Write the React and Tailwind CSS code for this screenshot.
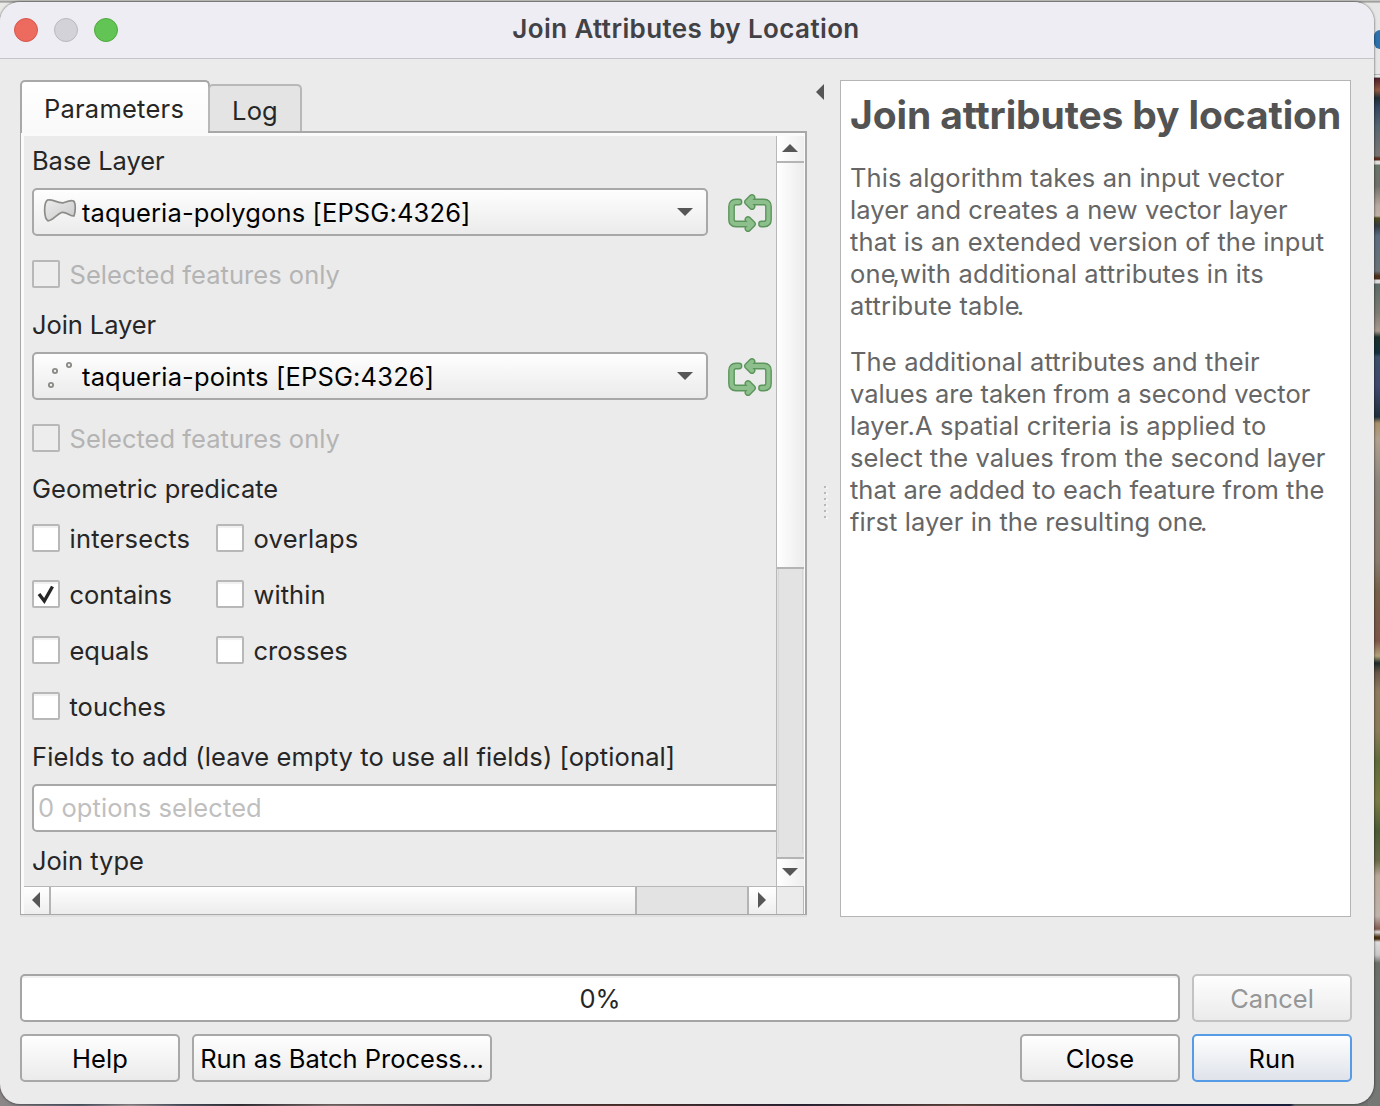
import React from "react";

function Label({ children, className = "" }) {
  return (
    <div className={`h-8 shrink-0 whitespace-nowrap text-[25.5px] leading-8 text-[#262626] ${className}`}>
      {children}
    </div>
  );
}

function Tri({ dir }) {
  const d = {
    up: "M0 8 L8 0 L16 8 Z",
    down: "M0 0 L16 0 L8 8 Z",
    left: "M8 0 L8 16 L0 8 Z",
    right: "M0 0 L8 8 L0 16 Z",
  }[dir];
  const vertical = dir === "up" || dir === "down";
  return (
    <svg width={vertical ? 16 : 8} height={vertical ? 8 : 16} className="block shrink-0">
      <path d={d} fill="#565656" />
    </svg>
  );
}

function Combo({ icon, children, className }) {
  return (
    <div className="flex h-12 w-[676px] shrink-0 items-center rounded-[5px] border-2 border-[#a8a8a8] bg-linear-to-b from-[#fefefe] to-[#ebebeb] pr-[13px]">
      <div className="w-12 shrink-0">{icon}</div>
      <div className={`flex-1 whitespace-nowrap pt-0.5 text-[25.5px] leading-8 text-black ${className}`}>{children}</div>
      <Tri dir="down" />
    </div>
  );
}

function PolygonIcon() {
  return (
    <svg width="48" height="44" viewBox="0 0 48 44" className="block">
      <defs>
        <linearGradient id="poly" x1="0" y1="0" x2="1" y2="1">
          <stop offset="0" stopColor="#ececec" />
          <stop offset="1" stopColor="#c9c9c9" />
        </linearGradient>
      </defs>
      <path
        d="M13.500 10 C18.500 8.500 23 13.500 29.500 12.800 C33.500 11.300 36.500 9.800 39.500 11 C42 13 41.500 22 40 26 C36.500 26.500 32.500 21.500 27.500 22.500 C22.500 24.500 18.500 30.800 14 30.800 C9.700 28 9.500 13 13.500 10 Z"
        fill="url(#poly)"
        stroke="#8b8b87"
        strokeWidth="1.700"
      />
    </svg>
  );
}

function PointsIcon() {
  return (
    <svg width="48" height="44" viewBox="0 0 48 44" className="block" fill="#f4f4f4" stroke="#8b8b87" strokeWidth="1.900">
      <circle cx="21" cy="17" r="2.100" />
      <circle cx="35" cy="11" r="2.100" />
      <circle cx="17" cy="31" r="2.100" />
    </svg>
  );
}

function IterateIcon() {
  const d =
    "M11 9 H8 Q3.500 9 3.500 13.500 V26.500 Q3.500 31 8 31 H24 M20 26.500 L24.500 31 L20 35.500 M33.500 31 H36 Q40.500 31 40.500 26.500 V13.500 Q40.500 9 36 9 H20 M24 4.500 L19.500 9 L24 13.500";
  return (
    <svg width="44" height="40" viewBox="0 0 44 40" className="mt-0.5 block shrink-0" fill="none" strokeLinejoin="round" strokeLinecap="round">
      <path d={d} stroke="#5b955b" strokeWidth="6.800" />
      <path d={d} stroke="#8cbf8c" strokeWidth="4" />
    </svg>
  );
}

function Check({ label, checked, disabled, tracking = "" }) {
  return (
    <div className="flex h-7 shrink-0 items-center gap-[9.5px]">
      <div
        className={`flex size-7 shrink-0 items-center justify-center rounded-[2px] border-2 border-[#b8b8b8] ${
          disabled ? "bg-[#ededed]" : "bg-white shadow-[inset_0_2px_1px_#f0f0f0]"
        }`}
      >
        {checked && (
          <svg width="24" height="24" viewBox="0 0 24 24" className="block">
            <path d="M5 12 L10.300 19 L18.500 4.500" fill="none" stroke="#262626" strokeWidth="3.400" />
          </svg>
        )}
      </div>
      <div
        className={`whitespace-nowrap pt-px text-[25.5px] leading-8 ${tracking} ${
          disabled ? "text-[#b4b4b4]" : "text-[#262626]"
        }`}
      >
        {label}
      </div>
    </div>
  );
}

function Button({ children, className }) {
  return (
    <button
      className={`flex h-12 shrink-0 items-center justify-center whitespace-nowrap rounded-[5px] border-2 bg-linear-to-b from-[#fefefe] pt-0.5 text-[25.5px] leading-8 ${className}`}
    >
      {children}
    </button>
  );
}

function Tabs() {
  return (
    <div className="relative z-10 flex h-[53px] items-start">
      <div className="flex h-[53px] w-[190px] shrink-0 items-center justify-center rounded-t-[5px] border-2 border-b-0 border-[#a8a8a8] bg-linear-to-b from-white to-[#f9f9f9] pr-0.5 pt-[3px] text-[25.5px] leading-8 tracking-[0.25px] text-[#262626]">
        Parameters
      </div>
      <div className="-ml-0.5 mt-1 flex h-[47px] w-[94px] items-center justify-center rounded-t-[5px] border-2 border-b-0 border-[#b8b8b8] bg-[#e4e4e4] pt-1 text-[25.5px] leading-8 tracking-[0.2px] text-[#262626]">
        Log
      </div>
    </div>
  );
}

function Form() {
  return (
    <div className="flex h-[750px] w-[752px] flex-col overflow-hidden bg-[#ebebeb] pl-2 pt-[9px]">
      <Label className="tracking-[-0.06px]">Base Layer</Label>
      <div className="mt-[11px] flex shrink-0 items-center gap-5">
        <Combo icon={<PolygonIcon />} className="tracking-[0.13px]">taqueria-polygons [EPSG:4326]</Combo>
        <IterateIcon />
      </div>
      <div className="mt-6"><Check label="Selected features only" disabled tracking="tracking-[0.03px]" /></div>
      <Label className="mt-[21px] tracking-[-0.08px]">Join Layer</Label>
      <div className="mt-[11px] flex shrink-0 items-center gap-5">
        <Combo icon={<PointsIcon />} className="tracking-[0.16px]">taqueria-points [EPSG:4326]</Combo>
        <IterateIcon />
      </div>
      <div className="mt-6"><Check label="Selected features only" disabled tracking="tracking-[0.03px]" /></div>
      <Label className="mt-[21px]">Geometric predicate</Label>
      <div className="mt-[19px] grid shrink-0 grid-cols-[184px_184px] gap-y-7">
        <Check label="intersects" tracking="tracking-[0.25px]" />
        <Check label="overlaps" tracking="tracking-[0.25px]" />
        <Check label="contains" checked />
        <Check label="within" tracking="tracking-[0.07px]" />
        <Check label="equals" />
        <Check label="crosses" />
        <Check label="touches" />
      </div>
      <Label className="mt-[21px] tracking-[0.11px]">Fields to add (leave empty to use all fields) [optional]</Label>
      <div className="mt-[11px] flex h-12 w-[780px] shrink-0 items-center rounded-[5px] border-2 border-[#a8a8a8] bg-white pl-1 text-[25.5px] leading-8 tracking-[0.09px] text-[#bfbfbf]">
        0 options selected
      </div>
      <Label className="mt-[13px]">Join type</Label>
    </div>
  );
}

function VerticalScroll() {
  return (
    <div className="flex h-[750px] w-7 flex-col border-l border-[#b8b8b8]">
      <div className="flex h-[27px] items-center justify-center border-b-2 border-[#b4b4b4] bg-linear-to-r from-white to-[#eeeeee] pb-px pr-0.5">
        <Tri dir="up" />
      </div>
      <div className="h-[404px] bg-linear-to-r from-white to-[#ececec]" />
      <div className="flex-1 border-t-2 border-[#b4b4b4] bg-[#e3e3e3] px-px">
        <div className="h-[284px] border-x border-[#d6d6d6]" />
      </div>
      <div className="flex h-[29px] items-center justify-center border-t-2 border-[#b4b4b4] bg-linear-to-r from-white to-[#eeeeee] pb-0.5 pr-0.5">
        <Tri dir="down" />
      </div>
    </div>
  );
}

function HorizontalScroll() {
  return (
    <div className="flex h-7 border-t border-[#b8b8b8]">
      <div className="flex w-[27px] items-center justify-center border-r-2 border-[#b4b4b4] bg-linear-to-b from-white to-[#eeeeee] pb-0.5 pr-px">
        <Tri dir="left" />
      </div>
      <div className="w-[584px] bg-linear-to-b from-white to-[#ececec]" />
      <div className="flex-1 border-l-2 border-[#b4b4b4] bg-[#e3e3e3]" />
      <div className="flex w-[29px] items-center justify-center border-l-2 border-[#b4b4b4] bg-linear-to-b from-white to-[#eeeeee] pb-0.5 pr-0.5">
        <Tri dir="right" />
      </div>
      <div className="w-7 border-x border-[#b8b8b8] bg-[#ebebeb]" />
    </div>
  );
}

function HelpPanel() {
  return (
    <div className="h-[837px] w-[511px] shrink-0 border border-[#b5b5b5] bg-white pl-[9px] pt-2.5 text-[#666666]">
      <h1 className="h-12 whitespace-nowrap text-[39px] font-bold leading-[48px] tracking-[-0.13px] text-[#535353]">
        Join attributes by location
      </h1>
      <div className="mt-[23px] whitespace-nowrap text-[25.5px] leading-8">
        <div className="tracking-[0.1px]">This algorithm takes an input vector</div>
        <div className="tracking-[0.06px]">layer and creates a new vector layer</div>
        <div className="tracking-[0.11px]">that is an extended version of the input</div>
        <div className="tracking-[0.15px]">on<span className="tracking-[-3px]">e</span>,with additional attributes in its</div>
        <div className="tracking-[0.2px]">attribute tabl<span className="tracking-[-3px]">e</span>.</div>
      </div>
      <div className="mt-6 whitespace-nowrap text-[25.5px] leading-8">
        <div className="tracking-[0.14px]">The additional attributes and their</div>
        <div className="tracking-[-0.03px]">values are taken from a second vector</div>
        <div className="tracking-[0.12px]">layer.A spatial criteria is applied to</div>
        <div className="tracking-[0.05px]">select the values from the second layer</div>
        <div className="tracking-[0.03px]">that are added to each feature from the</div>
        <div className="tracking-[0.08px]">first layer in the resulting on<span className="tracking-[-3px]">e</span>.</div>
      </div>
    </div>
  );
}

function Splitter() {
  return (
    <div className="flex w-[33px] shrink-0 flex-col pl-[9px]">
      <div className="mt-1"><Tri dir="left" /></div>
      <div className="mt-[386px] flex flex-col gap-1 pl-2">
        {[0, 1, 2, 3, 4, 5].map((i) => (
          <div key={i} className="size-0.5 bg-[#b8b8b8] shadow-[2px_1px_0_#f6f6f6]" />
        ))}
      </div>
    </div>
  );
}

function Desktop() {
  return (
    <div className="flex h-full w-3 flex-col bg-[#e6e6e6]">
      <div className="h-[30px] bg-[linear-gradient(to_bottom,#d8d8d4_0px,#8d8d8d_2px,#e6e6e6_3px)]" />
      <div className="ml-1.5 h-[19px] rounded-l-[6px] bg-[#2b71ab]" />
      <div className="mt-[25px] h-px bg-[#b5b5b5]" />
      <div className="mt-0.5 h-px bg-[#999999]" />
      <div className="flex-1 bg-[linear-gradient(to_bottom,#4d1d2a_0px,#8f5a40_12px,#1f2f35_20px,#33475f_30px,#55646e_48px,#757473_74px,#757473_78px,#5a2c1c_80px,#5a2c1c_82px,#dddddd_83px,#dddddd_86px,#667468_87px,#70706c_108px,#b8aaa0_128px,#c0b2a8_138px,#4d4a1c_140px,#343c44_148px,#5a6c7e_158px,#6c7378_193px,#4c301a_198px,#4c301a_201px,#dddddd_202px,#dddddd_205px,#5b6b64_206px,#7d7c74_235px,#a79a8e_253px,#1a2f2a_259px,#14303c_275px,#3c5068_279px,#40486c_308px,#20303c_339px,#a89068_345px,#b0a190_361px,#8e867c_403px,#877a6c_483px,#75604a_513px,#7b5648_563px,#b3a27a_578px,#1e2a26_585px,#6a5848_595px,#8d7a60_613px,#8a7c58_653px,#5f6a3a_683px,#7a7a46_723px,#4a5a34_753px,#6b6a48_783px,#b8a898_798px,#c0b4ac_838px,#805a50_851px,#dddddd_854px,#4a3010_859px,#4a3010_861px,#dddddd_864px,#c8c8c8_877px,#6a6e68_885px,#767876_1028px)]" />
    </div>
  );
}

export default function App() {
  return (
    <div className="relative flex h-[1106px] w-[1380px] overflow-hidden bg-[linear-gradient(to_right,#8d8788_0px,#5c6474_80px,#a79da0_130px,#5a6070_180px,#3c3740_240px,#8a7a78_330px,#4d4450_480px,#5a3a34_620px,#30283c_800px,#6d5048_960px,#2a2d48_1120px,#1d2545_1290px,#707270_1295px,#707270_1380px)] font-['Inter','Liberation_Sans',sans-serif]">
      <div className="flex h-full w-full flex-col">
        <div className="h-10 bg-[linear-gradient(to_bottom,#d8d8d4_0px,#8d8d8d_2px,#e9e9e7_3px)]" />
      </div>
      <div className="absolute right-0 top-0 h-[1106px]">
        <Desktop />
      </div>
      <div className="absolute left-0 top-0.5 h-[1102px] w-[1374px] overflow-hidden rounded-[20px] bg-[#ebebeb] shadow-[0_0_2px_1px_#00000055]">
        <div className="flex h-[57px] items-center border-b border-[#c5c4c8] bg-[#eeedf3] pl-3.5">
          <div className="flex w-[104px] shrink-0 gap-4">
            <div className="size-6 rounded-full border border-[#d5564c] bg-[#ed6a5e]" />
            <div className="size-6 rounded-full border border-[#b9b8bd] bg-[#d3d2d8]" />
            <div className="size-6 rounded-full border border-[#50a93f] bg-[#61c454]" />
          </div>
          <div className="flex-1 pb-0.5 pr-[120px] text-center text-[26px] font-semibold leading-8 tracking-[0.39px] text-[#424146]">
            Join Attributes by Location
          </div>
        </div>

        <div className="flex pl-5 pt-[21px]">
          <div className="w-[787px] shrink-0">
            <Tabs />
            <div className="-mt-0.5 h-[784px] border border-r-2 border-t-2 border-[#a8a8a8] bg-[#fafafa] pl-[3px] pr-px pt-[3px] shadow-[0_2px_0_#e0e0e0]">
              <div className="flex">
                <Form />
                <VerticalScroll />
              </div>
              <HorizontalScroll />
            </div>
          </div>
          <Splitter />
          <HelpPanel />
        </div>

        <div className="mt-[57px] flex gap-3 pl-5">
          <div className="flex h-12 w-[1160px] items-center justify-center rounded-[5px] border-2 border-[#a5a5a5] bg-white pt-0.5 text-[25.5px] leading-8 text-[#262626] shadow-[inset_0_2px_0_#f1f1f1]">
            0%
          </div>
          <Button className="w-40 border-[#c2c2c2] to-[#ebebeb] text-[#969696]">Cancel</Button>
        </div>
        <div className="mt-3 flex gap-3 pl-5">
          <Button className="w-40 border-[#a8a8a8] to-[#ebebeb] tracking-[0.1px] text-black">Help</Button>
          <Button className="w-[300px] border-[#a8a8a8] to-[#ebebeb] text-black">Run as Batch Process...</Button>
          <Button className="ml-[516px] w-40 border-[#a8a8a8] to-[#ebebeb] text-black">Close</Button>
          <Button className="w-40 border-[#569be5] to-[#dfe3ea] tracking-[0.2px] text-black">Run</Button>
        </div>
      </div>
    </div>
  );
}
